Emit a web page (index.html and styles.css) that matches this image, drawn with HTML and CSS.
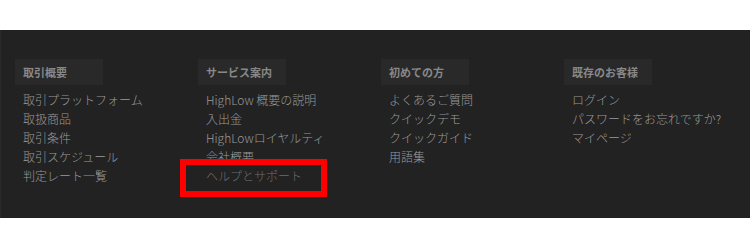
FILE: index.html
```html
<!DOCTYPE html>
<html lang="ja">
<head>
<meta charset="utf-8">
<link rel="stylesheet" href="styles.css">
</head>
<body>
<footer class="footer">
  <div class="col">
    <h3 class="head">取引概要</h3>
    <ul class="links">
      <li>取引プラットフォーム</li>
      <li>取扱商品</li>
      <li>取引条件</li>
      <li>取引スケジュール</li>
      <li>判定レート一覧</li>
    </ul>
  </div>
  <div class="col">
    <h3 class="head">サービス案内</h3>
    <ul class="links">
      <li>HighLow 概要の説明</li>
      <li>入出金</li>
      <li>HighLowロイヤルティ</li>
      <li>会社概要</li>
      <li class="marked">ヘルプとサポート<span class="mark"></span></li>
    </ul>
  </div>
  <div class="col">
    <h3 class="head">初めての方</h3>
    <ul class="links">
      <li>よくあるご質問</li>
      <li>クイックデモ</li>
      <li>クイックガイド</li>
      <li>用語集</li>
    </ul>
  </div>
  <div class="col">
    <h3 class="head">既存のお客様</h3>
    <ul class="links">
      <li>ログイン</li>
      <li>パスワードをお忘れですか?</li>
      <li>マイページ</li>
    </ul>
  </div>
</footer>
</body>
</html>
```
FILE: styles.css
```css
html, body {
  margin: 0;
  padding: 0;
  background: #ffffff;
}
body {
  padding-top: 30px;
  font-family: "Noto Sans CJK JP", "Noto Sans", sans-serif;
}
.footer {
  background: #222222;
  height: 188px;
  box-sizing: border-box;
  padding: 29px 0 0 14px;
  display: grid;
  grid-template-columns: repeat(4, 183px);
  align-items: start;
  border-left: 1px solid #2a2a2a;
}
.col {
  display: flex;
  flex-direction: column;
}
.head {
  margin: 0;
  width: 88px;
  height: 26px;
  box-sizing: border-box;
  padding-left: 8px;
  background: #292929;
  color: #888888;
  font-size: 11px;
  font-weight: bold;
  line-height: 26px;
  white-space: nowrap;
}
.links {
  list-style: none;
  margin: 5px 0 0;
  padding: 0 0 0 8px;
}
.links li {
  font-size: 12px;
  font-weight: 300;
  line-height: 19px;
  height: 19px;
  color: #9a9a9a;
  white-space: nowrap;
}
.links li.marked {
  position: relative;
  color: #6e6e6e;
}
.mark {
  position: absolute;
  left: -26px;
  top: -7px;
  width: 147px;
  height: 38px;
  box-sizing: border-box;
  border: 6px solid #ff0000;
}
```
